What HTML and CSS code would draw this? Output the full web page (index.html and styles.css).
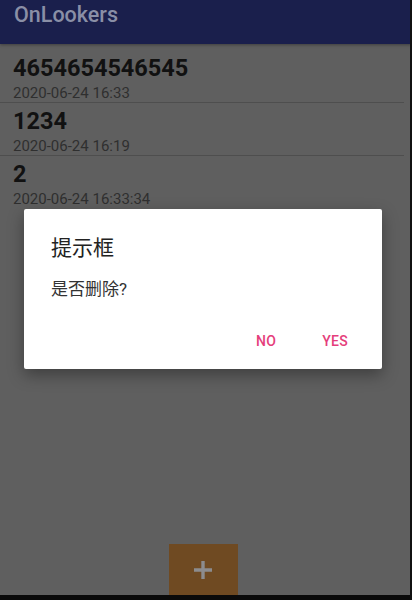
FILE: index.html
```html
<!DOCTYPE html>
<html>
<head>
<meta charset="utf-8">
<link rel="stylesheet" href="styles.css">
</head>
<body>
<div class="screen">
  <header class="appbar"><span class="appbar-title">OnLookers</span></header>
  <ul class="list">
    <li class="item"><div class="item-title">4654654546545</div><div class="item-date">2020-06-24 16:33</div></li>
    <li class="item"><div class="item-title">1234</div><div class="item-date">2020-06-24 16:19</div></li>
    <li class="item"><div class="item-title">2</div><div class="item-date">2020-06-24 16:33:34</div></li>
  </ul>
  <div class="fab-row">
    <div class="fab">
      <svg width="22" height="22" viewBox="0 0 22 22"><path d="M11 2v18M2 11h18" stroke="#8c8c8e" stroke-width="3.4"/></svg>
    </div>
  </div>
  <div class="bottom-bar"></div>
  <div class="right-edge"></div>
  <div class="dialog">
    <div class="dialog-title">提示框</div>
    <div class="dialog-msg">是否删除?</div>
    <div class="dialog-actions">
      <span class="btn">NO</span>
      <span class="btn">YES</span>
    </div>
  </div>
</div>
</body>
</html>
```
FILE: styles.css
```css
* { box-sizing: border-box; }
html, body { margin: 0; padding: 0; }
body { width: 412px; height: 600px; overflow: hidden; background: #5f5f5f; font-family: Roboto, "Noto Sans CJK SC", sans-serif; }
.screen { position: relative; width: 412px; height: 600px; display: flex; flex-direction: column; background: #5f5f5f; }
.appbar { height: 44px; background: #1a1f4c; display: flex; align-items: flex-start; padding: 2px 0 0 14px; box-shadow: 0 1px 3px rgba(0,0,0,0.35); }
.appbar-title { color: #8a8fa6; font-size: 21.5px; font-weight: 500; line-height: 26px; }
.list { list-style: none; margin: 0; padding: 6px 0 0 0; }
.item { padding: 3px 0 0 13px; border-bottom: 1px solid #4e4e4e; height: 53px; margin-right: 8px; }
.item:last-child { border-bottom: none; }
.item-title { font-size: 23.5px; font-weight: 700; color: #111; line-height: 30px; }
.item-date { font-size: 15px; color: #2f2f2f; line-height: 18px; margin-top: 1px; }
.fab-row { flex: 1; display: flex; justify-content: center; align-items: flex-end; padding-right: 6px; }
.fab { width: 69px; height: 51px; background: #6f4a22; display: flex; align-items: center; justify-content: center; }
.bottom-bar { height: 5px; background: #0a0a0a; }
.right-edge { position: absolute; top: 0; right: 0; width: 2px; height: 600px; background: #111; }
.dialog { position: absolute; left: 24px; top: 209px; width: 358px; height: 160px; background: #fff; border-radius: 2px; box-shadow: 0 6px 16px rgba(0,0,0,0.35); padding: 23px 0 0 27px; display: flex; flex-direction: column; }
.dialog-title { font-family: "Noto Sans CJK SC", sans-serif; font-size: 21px; color: #222; line-height: 28px; }
.dialog-msg { font-family: Roboto, "Noto Sans CJK SC", sans-serif; font-size: 17px; color: #333; line-height: 22px; margin-top: 18px; }
.dialog-actions { display: flex; justify-content: flex-end; gap: 46px; padding-right: 34px; margin-top: 32px; }
.btn { color: #e53e7b; font-size: 14px; font-weight: 500; line-height: 18px; letter-spacing: 0.3px; }
```
